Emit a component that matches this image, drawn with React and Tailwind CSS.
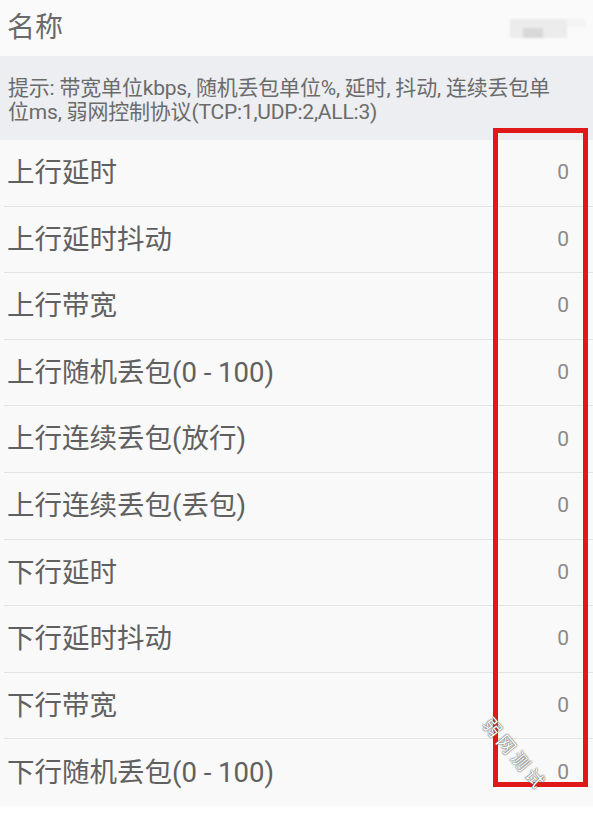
import React from "react";

// weak network settings list
const FIELDS = [
  "上行延时",
  "上行延时抖动",
  "上行带宽",
  "上行随机丢包(0 - 100)",
  "上行连续丢包(放行)",
  "上行连续丢包(丢包)",
  "下行延时",
  "下行延时抖动",
  "下行带宽",
  "下行随机丢包(0 - 100)",
];

const FONT = "font-['Roboto','Noto_Sans_CJK_SC',sans-serif]";

const Row = ({ label, value, last }) => (
  <div
    className={`ml-[4px] h-[66.6px] flex items-center justify-between pl-[3px] pr-[24px] ${
      last ? "" : "border-b border-[#e3e3e3]"
    }`}
  >
    <span className="text-[27.5px] text-[#606060] leading-none">{label}</span>
    <span className="text-[21px] text-[#8a8a8a] leading-none">{value}</span>
  </div>
);

export default function App() {
  return (
    <div className={`relative w-[593px] h-[822px] bg-white overflow-hidden ${FONT}`}>
      {/* name header, value is a blurred placeholder */}
      <div className="h-[56px] bg-[#fafafa] flex items-center justify-between pl-[7px] pr-[8px]">
        <span className="text-[28px] text-[#6a6a6a] leading-none">名称</span>
        <div className="flex items-start blur-[1px]">
          <div className="w-[57px] h-[19px] bg-[#ececec] flex items-end pl-[13px]">
            <div className="w-[20px] h-[10px] bg-[#d8d8d8]" />
          </div>
          <div className="w-[18px] h-[8px] bg-[#f3f3f3]" />
        </div>
      </div>

      {/* hint */}
      <div className="h-[84px] bg-[#eceef1] pl-[8px] pr-[32px] pt-[20px]">
        <p className="text-[21px] leading-[24px] text-[#6b6b6b] tracking-[-0.2px]">
          提示: 带宽单位kbps, 随机丢包单位%, 延时, 抖动, 连续丢包单位ms, 弱网控制协议(TCP:1,UDP:2,ALL:3)
        </p>
      </div>

      {/* values */}
      <div className="bg-[#f9f9f9]">
        {FIELDS.map((f, i) => (
          <Row key={f} label={f} value="0" last={i === FIELDS.length - 1} />
        ))}
      </div>

      {/* red annotation box */}
      <div className="absolute left-[493px] top-[128px] w-[95px] h-[659px] border-[5px] border-[#e01818]" />

      {/* watermark */}
      <div className="absolute left-[486px] top-[712px] rotate-[50deg] origin-left text-[18px] text-white leading-none tracking-[4px] [text-shadow:0_0_1px_#444,0_0_2px_#666]">
        弱网测试
      </div>
    </div>
  );
}
